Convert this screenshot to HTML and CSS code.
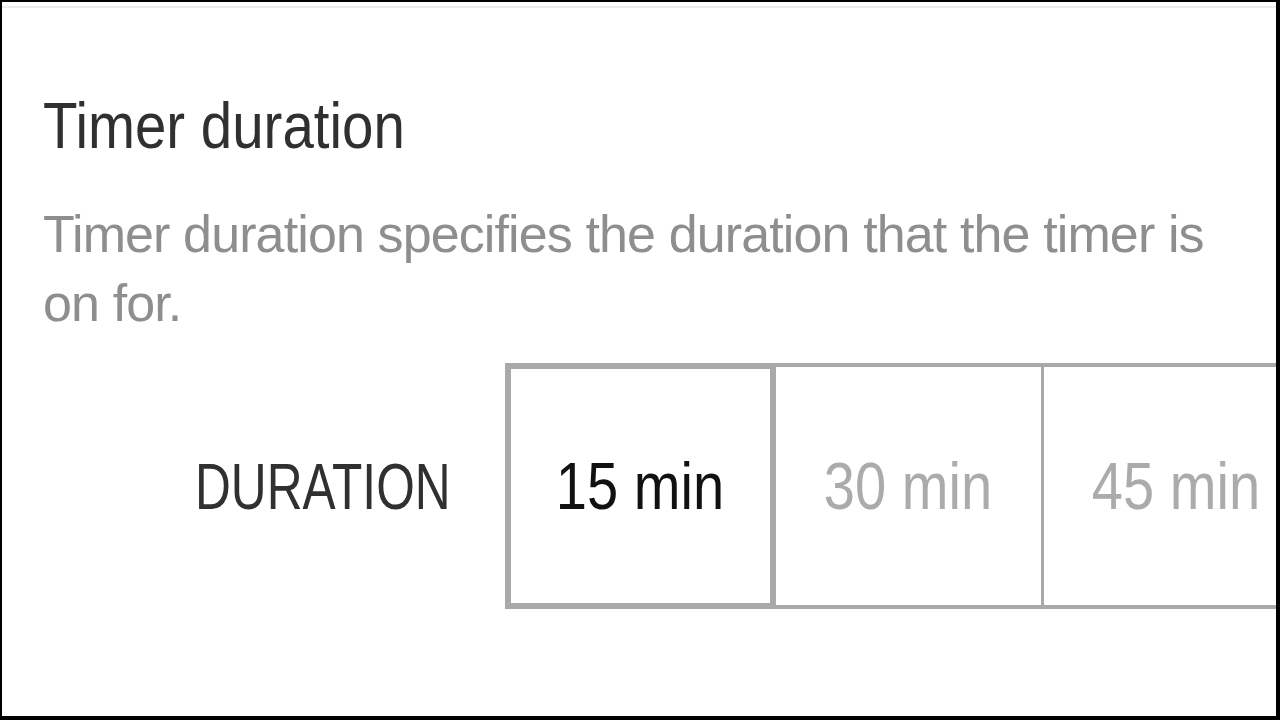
FILE: index.html
```html
<!DOCTYPE html>
<html lang="en">
<head>
<meta charset="utf-8">
<title>Timer duration</title>
<link rel="stylesheet" href="styles.css">
</head>
<body>
<div class="frame">
  <div class="topline"></div>
  <section class="setting">
    <h1 class="title"><span class="title-text">Timer duration</span></h1>
    <p class="desc">Timer duration specifies the duration that the timer is on for.</p>
    <div class="row">
      <div class="label"><span class="label-text">DURATION</span></div>
      <div class="segmented">
        <div class="seg seg-selected"><span class="seg-text">15 min</span></div>
        <div class="seg"><span class="seg-text">30 min</span></div>
        <div class="seg"><span class="seg-text">45 min</span></div>
      </div>
    </div>
  </section>
</div>
</body>
</html>
```
FILE: styles.css
```css
* { box-sizing: border-box; }
html, body { margin: 0; padding: 0; background: #000; }
body {
  width: 1280px;
  height: 720px;
  font-family: "Liberation Sans", Arial, sans-serif;
}
.frame {
  width: 1280px;
  height: 720px;
  background: #fff;
  border-top: 2px solid #000;
  border-left: 2px solid #000;
  border-right: 4px solid #000;
  border-bottom: 4px solid #000;
  overflow: hidden;
}
.topline {
  height: 6px;
  border-bottom: 2px solid #ececec;
}
.setting {
  padding-left: 41px;
}
.title {
  margin: 80px 0 0;
  font-size: 64px;
  line-height: 76px;
  font-weight: 400;
  color: #303030;
}
.title-text {
  display: inline-block;
  transform: scaleX(0.882);
  transform-origin: left center;
}
.desc {
  margin: 36px 0 0;
  width: 1200px;
  font-size: 52px;
  line-height: 69px;
  color: #8e8e8e;
  letter-spacing: -0.88px;
}
.row {
  margin-top: 25px;
  display: flex;
  align-items: center;
  gap: 54px;
}
.label {
  flex: 0 0 408px;
  text-align: right;
  font-size: 65px;
  color: #303030;
}
.label-text {
  display: inline-block;
  transform: scaleX(0.764);
  transform-origin: right center;
}
.segmented {
  display: flex;
  flex: 0 0 auto;
  height: 246px;
}
.seg {
  flex: 0 0 268px;
  height: 246px;
  display: flex;
  align-items: center;
  justify-content: center;
  border-top: 4px solid #a9a9a9;
  border-bottom: 4px solid #a9a9a9;
  border-right: 3px solid #a9a9a9;
  font-size: 66px;
  color: #ababab;
}
.seg-selected {
  flex: 0 0 271px;
  border: 6px solid #a9a9a9;
  color: #111;
}
.seg-text {
  display: inline-block;
  transform: scaleX(0.85);
}
```
